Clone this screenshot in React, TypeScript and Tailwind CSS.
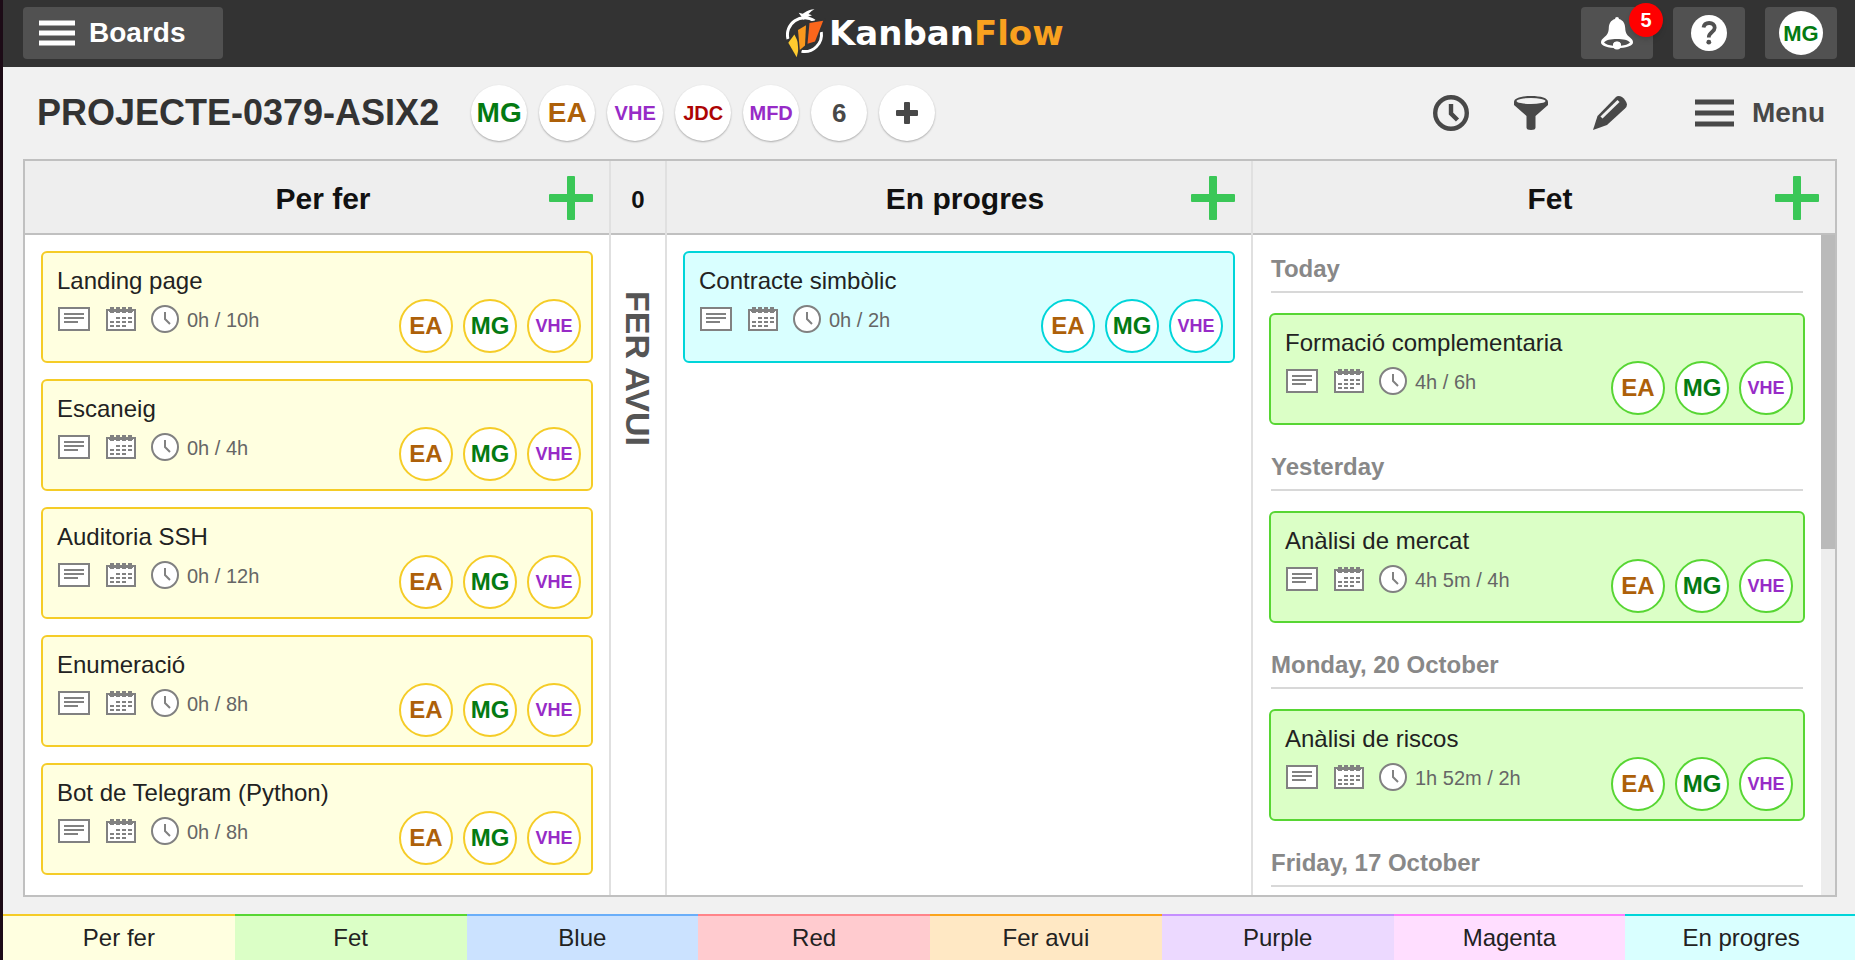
import React from 'react';

type Tone = 'yellow' | 'green' | 'cyan';
type Task = { title: string; time: string; tone: Tone };

const tones: Record<Tone, { card: string; ring: string }> = {
  yellow: { card: 'bg-[#ffffe0] border-[#f5cc27]', ring: 'border-[#f5cc27]' },
  green: { card: 'bg-[#dbffc6] border-[#57d633]', ring: 'border-[#57d633]' },
  cyan: { card: 'bg-[#d9ffff] border-[#00d5d9]', ring: 'border-[#00d5d9]' },
};

const todo: Task[] = [
  { title: 'Landing page', time: '0h / 10h', tone: 'yellow' },
  { title: 'Escaneig', time: '0h / 4h', tone: 'yellow' },
  { title: 'Auditoria SSH', time: '0h / 12h', tone: 'yellow' },
  { title: 'Enumeració', time: '0h / 8h', tone: 'yellow' },
  { title: 'Bot de Telegram (Python)', time: '0h / 8h', tone: 'yellow' },
];

const doing: Task[] = [{ title: 'Contracte simbòlic', time: '0h / 2h', tone: 'cyan' }];

const done: { day: string; task?: Task }[] = [
  { day: 'Today', task: { title: 'Formació complementaria', time: '4h / 6h', tone: 'green' } },
  { day: 'Yesterday', task: { title: 'Anàlisi de mercat', time: '4h 5m / 4h', tone: 'green' } },
  { day: 'Monday, 20 October', task: { title: 'Anàlisi de riscos', time: '1h 52m / 2h', tone: 'green' } },
  { day: 'Friday, 17 October' },
];

const members = [
  { name: 'MG', style: 'text-[28px] text-[#047a12]' },
  { name: 'EA', style: 'text-[28px] text-[#ad6009]' },
  { name: 'VHE', style: 'text-[20px] text-[#972bc7]' },
  { name: 'JDC', style: 'text-[20px] text-[#ad0404]' },
  { name: 'MFD', style: 'text-[20px] text-[#972bc7]' },
  { name: '6', style: 'text-[26px] text-[#484848]' },
];

const assignees = [
  { name: 'EA', style: 'text-[24px] text-[#ad6009]' },
  { name: 'MG', style: 'text-[24px] text-[#047a12]' },
  { name: 'VHE', style: 'text-[18px] text-[#972bc7]' },
];

const colours = [
  { name: 'Per fer', style: 'bg-[#ffffe0] border-[#f5cc27]' },
  { name: 'Fet', style: 'bg-[#dbffc6] border-[#57d633]' },
  { name: 'Blue', style: 'bg-[#cbe2ff] border-[#6aaef9]' },
  { name: 'Red', style: 'bg-[#ffcbcf] border-[#ff8489]' },
  { name: 'Fer avui', style: 'bg-[#ffe8c4] border-[#fba41c]' },
  { name: 'Purple', style: 'bg-[#ecd9ff] border-[#c58fff]' },
  { name: 'Magenta', style: 'bg-[#ffdeff] border-[#ff7fff]' },
  { name: 'En progres', style: 'bg-[#d9ffff] border-[#00d5d9]' },
];

function Logo() {
  return (
    <svg width="288" height="51" viewBox="0 0 288 51" role="img" aria-label="KanbanFlow">
      <g fill="none" stroke="#fff" strokeWidth="3">
        <path d="M2 31A17 17 0 0 1 28.500 13" />
        <path d="M35.300 24A17 17 0 0 1 15.500 43.300" />
      </g>
      <path d="M12.700 4.700L16.700 5.800L18.700 4.500Q22.500 1.500 28.500 1.200Q24.500 3 22.500 6L26 7.200L20 9.500L17.800 12L15.500 8.800Z" fill="#fff" />
      <g stroke="#333" strokeWidth="3" paintOrder="stroke">
        <path d="M2.300 34.700L8.400 26.500L13.500 37L10.700 49.200Z" fill="#fecb2f" />
        <path d="M12 22L20 17.300L19 37.500L13.800 42Z" fill="#f9981d" />
        <path d="M23.500 15L37.200 12.700L29 33.500L21.500 35.700Z" fill="#fa661c" />
      </g>
      <text x="43" y="37" fontFamily="DejaVu Sans" fontWeight="700" fontSize="34" fill="#fff">
        Kanban<tspan fill="#f9a11f">Flow</tspan>
      </text>
    </svg>
  );
}

function Bars({ w, gap }: { w: number; gap: number }) {
  return (
    <svg className="shrink-0" width={w} height={gap * 2 + 6} aria-hidden="true" fill="currentColor">
      <rect y="0.5" width={w} height="5" />
      <rect y={gap + 0.5} width={w} height="5" />
      <rect y={gap * 2 + 0.5} width={w} height="5" />
    </svg>
  );
}

function BellIcon() {
  return (
    <svg width="32" height="33" viewBox="0 0 32 33" aria-hidden="true">
      <path d="M16 0a2 2 0 0 1 2 2c4.500 1.300 6 5 6.200 9c.2 5 1.800 7 4.800 9.500c2 1.500 3 3 3 5c0 3.500-7 5.500-16 5.500s-16-2-16-5.500c0-2 1-3.500 3-5c3-2.500 4.600-4.500 4.800-9.500c.2-4 1.700-7.700 6.200-9a2 2 0 0 1 2-2z" fill="#fff" />
      <path d="M3 25.500c1.500-2.500 7-3.500 13-3.500s11.500 1 13 3.500c-2 2-5 2.800-9 3.200a4 4 0 0 0-8 0c-4-.4-7-1.200-9-3.200z" fill="#515151" />
      <circle cx="16" cy="28.500" r="4" fill="#fff" />
    </svg>
  );
}

function HelpIcon() {
  return (
    <svg width="36" height="36" viewBox="0 0 36 36" aria-hidden="true">
      <circle cx="18" cy="18" r="18" fill="#fff" />
      <path d="M12.500 12.500c.5-3 2.500-4.500 5.700-4.500c3.300 0 5.500 1.800 5.500 4.800c0 4.200-5.900 4.400-5.900 9.700" fill="none" stroke="#515151" strokeWidth="3.800" />
      <circle cx="17.800" cy="27.200" r="2.400" fill="#515151" />
    </svg>
  );
}

function ClockIcon() {
  return (
    <svg width="36" height="36" viewBox="0 0 36 36" aria-hidden="true" fill="none" stroke="#484848">
      <circle cx="18" cy="18" r="15.800" strokeWidth="4.400" />
      <path d="M18 9v9.500l6.500 6.500" strokeWidth="4.400" />
    </svg>
  );
}

function FilterIcon() {
  return (
    <svg width="34" height="34" viewBox="0 0 34 34" aria-hidden="true">
      <path d="M0 6C0 2 7 0 17 0s17 2 17 6v3L21.500 20v11.500Q21.500 34 17 34t-4.500-2.500V20L0 9z" fill="#484848" />
      <ellipse cx="17" cy="5" rx="14.500" ry="3" fill="#f1f1f1" />
    </svg>
  );
}

function PencilIcon() {
  return (
    <svg width="34" height="34" viewBox="0 0 34 34" aria-hidden="true">
      <path d="M0 34L4.500 20L22.500 1.500Q25-1 29 1Q33 4 34 8.500Q34 10.500 32 12.500L14 29Z" fill="#484848" />
      <path d="M8.500 21.500L25.500 5" stroke="#f1f1f1" strokeWidth="3" />
    </svg>
  );
}

function PlusIcon() {
  return (
    <svg width="44" height="44" aria-hidden="true" fill="#3ac757">
      <rect x="18" width="8" height="44" rx="1" />
      <rect y="18" width="44" height="8" rx="1" />
    </svg>
  );
}

function NoteIcon() {
  return (
    <svg width="32" height="24" aria-hidden="true" stroke="#818181" strokeWidth="2">
      <rect x="1" y="1" width="30" height="22" fill="#fff" />
      <path d="M6 7h20M6 11h20M6 15h14" />
    </svg>
  );
}

function CalendarIcon() {
  return (
    <svg width="30" height="24" aria-hidden="true" stroke="#818181" strokeWidth="2">
      <rect x="1" y="3" width="28" height="20" fill="#fff" />
      <path d="M6 0v6M12 0v6M18 0v6M24 0v6" strokeWidth="4" />
      <path d="M3 4h24" />
      <path d="M10 11h4M16 11h4M22 11h4M4 15h4M10 15h4M16 15h4M22 15h4M4 19h4M10 19h4M16 19h4" />
    </svg>
  );
}

function SmallClockIcon() {
  return (
    <svg width="28" height="28" aria-hidden="true" stroke="#818181" strokeWidth="2">
      <circle cx="14" cy="14" r="13" fill="#fff" />
      <path d="M14 7v7l5 5" fill="none" />
    </svg>
  );
}

function Card({ task }: { task: Task }) {
  const tone = tones[task.tone];
  return (
    <article className={`flex h-28 justify-between rounded-md border-2 pt-3.5 pr-2.5 pb-2 pl-3.5 ${tone.card}`}>
      <div>
        <h3 className="text-[24px] leading-7 text-[#222]">{task.title}</h3>
        <div className="mt-[9px] flex items-center pl-px">
          <NoteIcon />
          <span className="ml-4 flex"><CalendarIcon /></span>
          <span className="mr-2 ml-[15px] flex"><SmallClockIcon /></span>
          <span className="pt-0.5 text-[20px] leading-7 text-[#666]">{task.time}</span>
        </div>
      </div>
      <div className="flex gap-2.5 self-end">
        {assignees.map((a) => (
          <span
            key={a.name}
            className={`flex size-[54px] items-center justify-center rounded-full border-2 bg-white font-bold ${tone.ring} ${a.style}`}
          >
            {a.name}
          </span>
        ))}
      </div>
    </article>
  );
}

function ColumnHeader({ title }: { title: string }) {
  return (
    <header className="flex h-[74px] shrink-0 items-center border-b-2 border-[#c0c0c0] bg-[#eee] pt-0.5 pr-4 pl-[72px]">
      <h2 className="flex-1 pt-0.5 text-center text-[30px] leading-9 font-bold text-[#111]">{title}</h2>
      <button type="button" aria-label={`Add task to ${title}`} className="flex">
        <PlusIcon />
      </button>
    </header>
  );
}

export default function App() {
  return (
    <div className="flex h-screen flex-col overflow-hidden border-l-3 border-[#1c0b16] bg-[#f1f1f1] font-['Liberation_Sans',sans-serif]">
      <header className="grid h-[67px] shrink-0 grid-cols-[1fr_auto_1fr] items-center bg-[#333] pr-[18px] pl-5">
        <button type="button" className="-mt-px flex h-[52px] w-[200px] items-center gap-3.5 rounded bg-[#515151] pl-4 text-[28px] font-bold text-white">
          <Bars w={36} gap={10} />
          Boards
        </button>
        <Logo />
        <div className="-mt-px flex justify-end gap-5">
          <button type="button" aria-label="Notifications" className="relative flex h-[52px] w-[72px] items-center justify-center rounded bg-[#515151]">
            <BellIcon />
            <span className="absolute -top-1 -right-2.5 flex size-[34px] items-center justify-center rounded-full bg-[#f00] text-[20px] font-bold text-white shadow-md">
              5
            </span>
          </button>
          <button type="button" aria-label="Help" className="flex h-[52px] w-[72px] items-center justify-center rounded bg-[#515151]">
            <HelpIcon />
          </button>
          <button type="button" className="flex h-[52px] w-[72px] items-center justify-center rounded bg-[#515151]">
            <span className="flex size-11 items-center justify-center rounded-full bg-white text-[22px] font-bold text-[#047a12]">MG</span>
          </button>
        </div>
      </header>

      <div className="flex h-[92px] shrink-0 items-center pr-[30px] pl-[34px]">
        <h1 className="text-[36px] leading-10 font-bold text-[#333]">PROJECTE-0379-ASIX2</h1>
        <div className="ml-8 flex gap-3">
          {members.map((m) => (
            <button
              type="button"
              key={m.name}
              className={`flex size-14 items-center justify-center rounded-full bg-white font-bold shadow-[0_1px_2px_rgba(0,0,0,0.3)] ${m.style}`}
            >
              {m.name}
            </button>
          ))}
          <button type="button" aria-label="Add member" className="flex size-14 items-center justify-center rounded-full bg-white shadow-[0_1px_2px_rgba(0,0,0,0.3)]">
            <svg width="22" height="22" aria-hidden="true" fill="#484848">
              <rect x="8" width="6" height="22" rx="1" />
              <rect y="8" width="22" height="6" rx="1" />
            </svg>
          </button>
        </div>
        <div className="ml-auto flex items-center">
          <button type="button" aria-label="Timer"><ClockIcon /></button>
          <button type="button" aria-label="Filter" className="ml-[45px]"><FilterIcon /></button>
          <button type="button" aria-label="Edit board" className="ml-[45px]"><PencilIcon /></button>
          <button type="button" className="ml-[68px] flex items-center gap-[18px] text-[28px] font-bold text-[#484848]">
            <Bars w={39} gap={11} />
            Menu
          </button>
        </div>
      </div>

      <main className="mr-[18px] mb-[17px] ml-5 grid min-h-0 flex-1 grid-cols-[586fr_56px_586fr_582fr] border-2 border-[#c0c0c0] bg-white">
        <section className="min-h-0 border-r-2 border-[#e0e0e0]">
          <ColumnHeader title="Per fer" />
          <div className="flex flex-col gap-4 p-4">
            {todo.map((t) => <Card key={t.title} task={t} />)}
          </div>
        </section>
        <section className="flex min-h-0 flex-col items-center border-r-2 border-[#e0e0e0]">
          <div className="flex h-[74px] w-full items-center justify-center border-b-2 border-[#c0c0c0] bg-[#eee] pt-1.5 text-[24px] font-bold text-[#111]">0</div>
          <h2 className="mt-14 text-[34px] leading-9 font-bold whitespace-nowrap text-[#555] uppercase [writing-mode:vertical-rl]">Fer avui</h2>
        </section>
        <section className="min-h-0 border-r-2 border-[#e0e0e0]">
          <ColumnHeader title="En progres" />
          <div className="flex flex-col gap-4 p-4">
            {doing.map((t) => <Card key={t.title} task={t} />)}
          </div>
        </section>
        <section className="flex min-h-0 flex-col">
          <ColumnHeader title="Fet" />
          <div className="flex min-h-0 flex-1 overflow-hidden">
            <div className="flex-1 px-4 pt-5">
              {done.map(({ day, task }) => (
                <div key={day} className="pb-7">
                  <h3 className="mx-0.5 border-b-2 border-[#d8d8d8] pb-2 text-[24px] leading-7 font-bold text-[#888]">{day}</h3>
                  {task && <div className="mt-5"><Card task={task} /></div>}
                </div>
              ))}
            </div>
            <div className="w-3.5 bg-[#ededed]">
              <div className="h-[47.5%] bg-[#bababa]" />
            </div>
          </div>
        </section>
      </main>

      <footer className="-mr-0.5 flex h-[46px] shrink-0">
        {colours.map((c) => (
          <button type="button" key={c.name} className={`flex-1 border-t-2 text-[24px] leading-7 text-[#222] ${c.style}`}>
            {c.name}
          </button>
        ))}
      </footer>
    </div>
  );
}
